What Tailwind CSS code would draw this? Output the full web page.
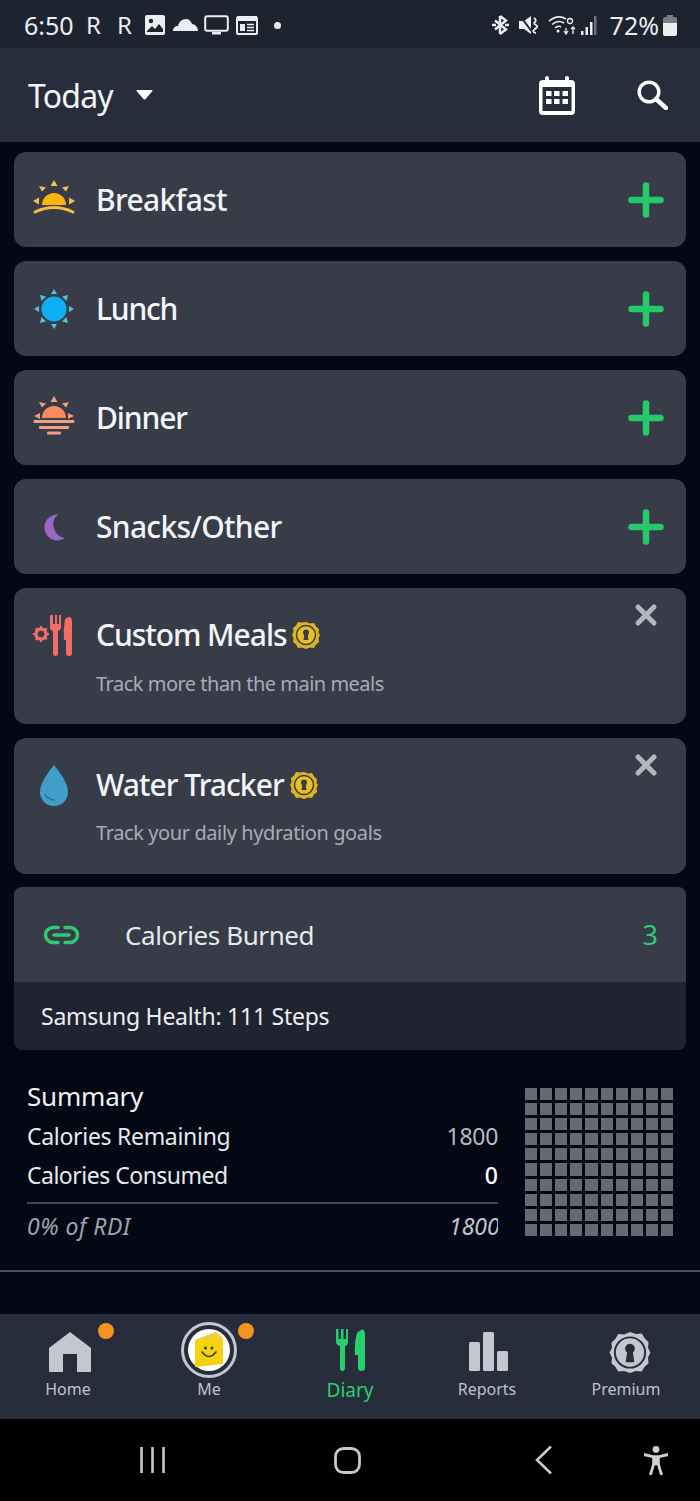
<!DOCTYPE html>
<html lang="en">
<head>
<meta charset="utf-8">
<script src="https://cdn.jsdelivr.net/npm/@tailwindcss/browser@4"></script>
<title>Diary</title>
</head>
<body class="bg-[#030814]">
<div class="w-[700px] h-[1501px] overflow-hidden flex flex-col bg-[#030814] text-white font-['Noto_Sans',sans-serif]">

  <!-- status bar -->
  <div class="h-[48px] shrink-0 bg-[#1e2330] flex items-center justify-between pl-[24px] pr-[23px] pt-[2px] text-[#eceef2]">
    <div class="flex items-center">
      <span class="text-[25px] leading-none w-[62px]">6:50</span>
      <span class="text-[24px] leading-none w-[31px]">R</span>
      <span class="text-[24px] leading-none w-[27px]">R</span>
      <svg class="w-[22px] h-[22px]" viewBox="0 0 22 22"><rect x="1" y="1" width="20" height="20" rx="2" fill="#eceef2"/><circle cx="7" cy="7" r="2.2" fill="#1e2330"/><path d="M3 17l5-5 3 3 4-5 4 5v3H3z" fill="#1e2330"/></svg>
      <svg class="w-[25px] h-[14px] ml-[7px]" viewBox="0 0 25 14"><path d="M0 13c0-3 2-5 5-5 1-4 4-7 8-7 3 0 5 2 6 5 3 0 6 3 6 7H0z" fill="#eceef2"/></svg>
      <svg class="w-[25px] h-[20px] ml-[6px]" viewBox="0 0 25 20"><rect x="1.2" y="1.2" width="22.6" height="14.6" rx="2" fill="none" stroke="#eceef2" stroke-width="2"/><rect x="8" y="17" width="9" height="2.5" fill="#eceef2"/></svg>
      <svg class="w-[22px] h-[20px] ml-[7px]" viewBox="0 0 22 20"><rect x="1" y="2.5" width="20" height="16.5" rx="1" fill="none" stroke="#eceef2" stroke-width="2"/><rect x="1" y="1" width="20" height="5" fill="#eceef2"/><rect x="4" y="9" width="5" height="7" fill="#eceef2"/><path d="M11 9.5h7M11 12.5h7M11 15.5h7" stroke="#eceef2" stroke-width="1.5"/></svg>
      <span class="w-[7px] h-[7px] rounded-full bg-[#eceef2] ml-[16px]"></span>
    </div>
    <div class="flex items-center">
      <svg class="w-[19px] h-[22px]" viewBox="0 0 19 22"><path d="M9 2l6 4.5-11 9M9 20l6-4.5-11-9M9 2v18" fill="none" stroke="#eceef2" stroke-width="2.4"/><path d="M1 11h4M14 11h4" stroke="#eceef2" stroke-width="2.4"/></svg>
      <svg class="w-[21px] h-[20px] ml-[9px]" viewBox="0 0 21 20"><path d="M0 6h5l7-5v18l-7-5H0z" fill="#eceef2"/><path d="M1 1l13 17" stroke="#1e2330" stroke-width="2"/><path d="M15 3q3 2 1 4t1 3-1 4 1 4" fill="none" stroke="#eceef2" stroke-width="1.8"/></svg>
      <svg class="w-[28px] h-[20px] ml-[8px]" viewBox="0 0 28 20"><path d="M1 6q9-7 17-2M4 9.500q6-5 12-1.500M7 13q3-3 6-1" fill="none" stroke="#eceef2" stroke-width="1.6"/><circle cx="10" cy="16" r="1.500" fill="#eceef2"/><path d="M18 19v-6M16 16l2 3 2-3M25 19v-7M23 14l2-2 2 2" fill="none" stroke="#eceef2" stroke-width="1.300"/><circle cx="22" cy="6" r="2.500" fill="none" stroke="#eceef2" stroke-width="1.300"/></svg>
      <svg class="w-[18px] h-[20px] ml-[5px]" viewBox="0 0 18 20"><rect x="0" y="16" width="2.500" height="4" fill="#eceef2"/><rect x="4.500" y="12" width="2.500" height="8" fill="#eceef2"/><rect x="9" y="7" width="2.500" height="13" fill="#eceef2"/><rect x="13" y="1" width="2.500" height="19" fill="#6e7280"/></svg>
      <span class="text-[25px] leading-none ml-[11px] whitespace-nowrap">72%</span>
      <svg class="w-[14px] h-[21px] ml-[4px] shrink-0" viewBox="0 0 14 21"><path d="M4 0h6v2h2q2 0 2 2v4H0V4q0-2 2-2h2z" fill="#7a7d87"/><path d="M0 8h14v11q0 2-2 2H2q-2 0-2-2z" fill="#eceef2"/></svg>
    </div>
  </div>

  <!-- app bar -->
  <div class="h-[94px] shrink-0 bg-[#272d3a] flex items-center pl-[28px] pr-[32px]">
    <span class="mr-[23px] pt-[2px] w-[85px] text-[32px] leading-none whitespace-nowrap tracking-[-0.8px] text-[#f4f5f8]">Today</span>
    <svg class="w-[17px] h-[10px]" viewBox="0 0 17 10"><path d="M0.500 1q-.3-1 1-1h14q1.300 0 1 1L9.500 9q-1 1-2 0z" fill="#fff"/></svg>
    <div class="ml-auto flex items-center">
      <svg class="w-[36px] h-[39px]" viewBox="0 0 36 39"><path d="M6 4V2q0-2 2-2t2 2v2h16V2q0-2 2-2t2 2v2h2q4 0 4 4v27q0 4-4 4H4q-4 0-4-4V8q0-4 4-4z" fill="#fff"/><rect x="3.500" y="11" width="29" height="24" fill="#272d3a"/><g fill="#fff"><rect x="7" y="15" width="5.500" height="5"/><rect x="15" y="15" width="5.500" height="5"/><rect x="23.500" y="15" width="5.500" height="5"/><rect x="7" y="23" width="5.500" height="5"/><rect x="15" y="23" width="5.500" height="5"/><rect x="23.500" y="23" width="5.500" height="5"/></g></svg>
      <svg class="w-[31px] h-[30px] ml-[62px]" viewBox="0 0 31 30"><circle cx="12" cy="12" r="9.800" fill="none" stroke="#fff" stroke-width="3.400"/><path d="M19 19l10 9" stroke="#fff" stroke-width="4.400" stroke-linecap="round"/></svg>
    </div>
  </div>

  <!-- content -->
  <div class="flex-1 flex flex-col pt-[10px]">
    <div class="flex flex-col px-[14px] gap-[14px]">

      <div class="h-[95px] rounded-xl bg-[#383c49] flex items-center pl-[18px] pr-[22px]">
        <svg class="w-[44px] h-[44px] shrink-0" viewBox="0 0 44 44"><path d="M10 27a12 12 0 0 1 24 0z" fill="#fbb40a"/><path d="M3 34q19-9 38 0" fill="none" stroke="#f3bf3c" stroke-width="3" stroke-linecap="round"/><g fill="#f3c24a"><path d="M22 2l3.500 6h-7z"/><path d="M7 8l7 1.500-4 4z"/><path d="M37 8l-7 1.500 4 4z"/><path d="M1 23l6-3.500v7z"/><path d="M43 23l-6-3.500v7z"/></g></svg>
        <span class="ml-[20px] text-[30px] leading-none font-medium tracking-[-0.65px] text-[#f4f5f8]">Breakfast</span>
        <svg class="ml-auto w-[36px] h-[36px]" viewBox="0 0 36 36"><path d="M18 3.500v29M3.500 18h29" stroke="#26c96a" stroke-width="6.500" stroke-linecap="round"/></svg>
      </div>

      <div class="h-[95px] rounded-xl bg-[#383c49] flex items-center pl-[18px] pr-[22px]">
        <svg class="w-[44px] h-[44px] shrink-0" viewBox="0 0 44 44"><circle cx="22" cy="22" r="12.500" fill="#0db0f5"/><g fill="#5ebcdc"><path d="M22 2l3 5h-6z"/><path d="M22 42l3-5h-6z"/><path d="M2 22l5-3v6z"/><path d="M42 22l-5-3v6z"/><path d="M8 8l6 1.500-4.500 4.500z"/><path d="M36 8l-6 1.500 4.500 4.500z"/><path d="M8 36l6-1.500-4.500-4.500z"/><path d="M36 36l-6-1.500 4.500-4.500z"/></g></svg>
        <span class="ml-[20px] text-[30px] leading-none font-medium tracking-[-1.2px] text-[#f4f5f8]">Lunch</span>
        <svg class="ml-auto w-[36px] h-[36px]" viewBox="0 0 36 36"><path d="M18 3.500v29M3.500 18h29" stroke="#26c96a" stroke-width="6.500" stroke-linecap="round"/></svg>
      </div>

      <div class="h-[95px] rounded-xl bg-[#383c49] flex items-center pl-[18px] pr-[22px]">
        <svg class="w-[44px] h-[44px] shrink-0" viewBox="0 0 44 44"><path d="M10 22a12 12 0 0 1 24 0z" fill="#f98b5f"/><g fill="#f0a07f"><path d="M22 0l3.500 6h-7z"/><path d="M7 6l7 1.500-4 4z"/><path d="M37 6l-7 1.500 4 4z"/><path d="M2 20l6-3v6z"/><path d="M42 20l-6-3v6z"/><rect x="1.500" y="24" width="41" height="3" rx="1"/><rect x="7" y="30" width="30" height="3" rx="1"/><rect x="15" y="35.500" width="14" height="3" rx="1"/></g></svg>
        <span class="ml-[20px] text-[30px] leading-none font-medium tracking-[-1.1px] text-[#f4f5f8]">Dinner</span>
        <svg class="ml-auto w-[36px] h-[36px]" viewBox="0 0 36 36"><path d="M18 3.500v29M3.500 18h29" stroke="#26c96a" stroke-width="6.500" stroke-linecap="round"/></svg>
      </div>

      <div class="h-[95px] rounded-xl bg-[#383c49] flex items-center pl-[18px] pr-[22px]">
        <svg class="w-[44px] h-[44px] shrink-0" viewBox="0 0 44 44"><path d="M26 9.500A13 13 0 1 0 33 33 13.500 13.500 0 0 1 26 9.500z" fill="#9a66c8"/></svg>
        <span class="ml-[20px] text-[30px] leading-none font-medium tracking-[-0.7px] text-[#f4f5f8]">Snacks/Other</span>
        <svg class="ml-auto w-[36px] h-[36px]" viewBox="0 0 36 36"><path d="M18 3.500v29M3.500 18h29" stroke="#26c96a" stroke-width="6.500" stroke-linecap="round"/></svg>
      </div>

      <div class="h-[136px] rounded-xl bg-[#383c49] flex pl-[18px] pr-[28px] pt-[26px]">
        <svg class="w-[44px] h-[44px] shrink-0" viewBox="0 0 44 44"><g fill="#ef6f66"><path d="M18 1h2v9h2V1h2v9h2V1h2v12q0 3-3 4v22q0 3-2.500 3T20 39V17q-3-1-3-4V1z" transform="translate(1 0)"/><path d="M33 5q7-5 7 3v31q0 3-3 3t-3-3V26h-2q-1-10 1-21z"/><circle cx="9" cy="20" r="5" fill="none" stroke="#ef6f66" stroke-width="3.500"/><path d="M8 12h2v3H8zM8 25h2v3H8zM1 19h3v2H1zM14 19h3v2h-3zM3 15l1.500-1.500 2 2L5 17zM12 24l1.500-1.500 2 2L14 26zM3 25l2-2 1.500 1.500-2 2zM12 15.500l2-2 1.500 1.500-2 2z"/></g></svg>
        <div class="ml-[20px]">
          <div class="flex items-center h-[42px]">
            <span class="text-[30px] leading-none font-medium tracking-[-1.05px] text-[#f4f5f8]">Custom Meals</span>
            <svg class="w-[28px] h-[28px] ml-[6px]" viewBox="0 0 28 28"><path d="M14 1l4 1.500 4-.5 2 3.500 3 2.500-.5 4L28 14l-1.500 3 .5 4-3 2.500-2 3.500-4-.5-4 1.500-4-1.500-4 .5-2-3.500-3-2.500.5-4L0 14l1.500-3-.5-4 3-2.500 2-3.500 4 .5z" fill="#dcb41d"/><circle cx="14" cy="14" r="9.500" fill="#e7c21f" stroke="#383c49" stroke-width="1.500"/><circle cx="14" cy="11.500" r="3" fill="#383c49"/><path d="M12.500 12h3l1 7h-5z" fill="#383c49"/></svg>
          </div>
          <div class="mt-[18px] text-[20px] leading-none tracking-[-0.5px] text-[#a8abb5]">Track more than the main meals</div>
        </div>
        <svg class="ml-auto mt-[-11px] w-[24px] h-[24px]" viewBox="0 0 24 24"><path d="M4 4l16 16M20 4L4 20" stroke="#b3b6be" stroke-width="5" stroke-linecap="round"/></svg>
      </div>

      <div class="h-[136px] rounded-xl bg-[#383c49] flex pl-[18px] pr-[28px] pt-[26px]">
        <svg class="w-[44px] h-[44px] shrink-0 mt-[-2px]" viewBox="0 0 44 44"><path d="M22 3q14 17 14 27a14 14 0 0 1-28 0Q8 20 22 3z" fill="#3f9fc6"/><path d="M13 32q3 6 10 6" fill="none" stroke="#2a6d8c" stroke-width="1.500"/></svg>
        <div class="ml-[20px]">
          <div class="flex items-center h-[42px]">
            <span class="text-[30px] leading-none font-medium tracking-[-0.95px] text-[#f4f5f8]">Water Tracker</span>
            <svg class="w-[28px] h-[28px] ml-[6px]" viewBox="0 0 28 28"><path d="M14 1l4 1.500 4-.5 2 3.500 3 2.500-.5 4L28 14l-1.500 3 .5 4-3 2.500-2 3.500-4-.5-4 1.500-4-1.500-4 .5-2-3.500-3-2.500.5-4L0 14l1.500-3-.5-4 3-2.500 2-3.500 4 .5z" fill="#dcb41d"/><circle cx="14" cy="14" r="9.500" fill="#e7c21f" stroke="#383c49" stroke-width="1.500"/><circle cx="14" cy="11.500" r="3" fill="#383c49"/><path d="M12.500 12h3l1 7h-5z" fill="#383c49"/></svg>
          </div>
          <div class="mt-[17px] text-[20px] leading-none tracking-[-0.4px] text-[#a8abb5]">Track your daily hydration goals</div>
        </div>
        <svg class="ml-auto mt-[-11px] w-[24px] h-[24px]" viewBox="0 0 24 24"><path d="M4 4l16 16M20 4L4 20" stroke="#b3b6be" stroke-width="5" stroke-linecap="round"/></svg>
      </div>

      <div class="mt-[-1px] h-[163px] rounded-lg overflow-hidden flex flex-col">
        <div class="h-[95px] bg-[#383c49] flex items-center pl-[30px] pr-[28px]">
          <svg class="w-[35px] h-[20px]" viewBox="0 0 35 20"><path d="M14 2.500H9a7.500 7.500 0 0 0 0 15h5M21 2.500h5a7.500 7.500 0 0 1 0 15h-5M10 10h15" fill="none" stroke="#2ecc71" stroke-width="3.400" stroke-linecap="round"/></svg>
          <span class="ml-[46px] text-[26px] leading-none tracking-[-0.4px] text-[#e8e9ee]">Calories Burned</span>
          <span class="ml-auto text-[27px] leading-none text-[#2ecc71]">3</span>
        </div>
        <div class="flex-1 bg-[#1f2430] flex items-center pl-[27px]">
          <span class="text-[23px] leading-none tracking-[-0.25px] text-[#eceef2]">Samsung Health: 111 Steps</span>
        </div>
      </div>
    </div>

    <!-- summary -->
    <div class="flex pl-[27px] pr-[27px] pt-[29px] h-[222px] border-b-2 border-[#4a4e5a]">
      <div class="w-[471px] shrink-0">
        <div class="h-[34px] flex items-center text-[26px] leading-none tracking-[-0.2px] text-[#f0f1f4]">Summary</div>
        <div class="h-[39px] mt-[4px] flex items-center justify-between text-[23px] leading-none tracking-[-0.3px]"><span class="text-[#e8e9ee]">Calories Remaining</span><span class="text-[#b9bbc3]">1800</span></div>
        <div class="h-[39px] flex items-center justify-between text-[23px] leading-none"><span class="tracking-[-0.5px] text-[#e8e9ee]">Calories Consumed</span><span class="text-white font-medium">0</span></div>
        <div class="mt-[7px] pt-[8px] h-[38px] border-t-2 border-[#43464f] flex items-center justify-between text-[23px] leading-none italic text-[#a0a3ad]"><span class="tracking-[0.5px]">0% of RDI</span><span class="w-[49px] h-[28px] leading-[28px] overflow-clip text-[#c4c6ce]">1800</span></div>
      </div>
      <div class="ml-[27px] w-[148px] h-[148px] mt-[9px] grid grid-cols-10 gap-[3px]">
        <i class="bg-[#656974]"></i><i class="bg-[#656974]"></i><i class="bg-[#656974]"></i><i class="bg-[#656974]"></i><i class="bg-[#656974]"></i><i class="bg-[#656974]"></i><i class="bg-[#656974]"></i><i class="bg-[#656974]"></i><i class="bg-[#656974]"></i><i class="bg-[#656974]"></i>
        <i class="bg-[#656974]"></i><i class="bg-[#656974]"></i><i class="bg-[#656974]"></i><i class="bg-[#656974]"></i><i class="bg-[#656974]"></i><i class="bg-[#656974]"></i><i class="bg-[#656974]"></i><i class="bg-[#656974]"></i><i class="bg-[#656974]"></i><i class="bg-[#656974]"></i>
        <i class="bg-[#656974]"></i><i class="bg-[#656974]"></i><i class="bg-[#656974]"></i><i class="bg-[#656974]"></i><i class="bg-[#656974]"></i><i class="bg-[#656974]"></i><i class="bg-[#656974]"></i><i class="bg-[#656974]"></i><i class="bg-[#656974]"></i><i class="bg-[#656974]"></i>
        <i class="bg-[#656974]"></i><i class="bg-[#656974]"></i><i class="bg-[#656974]"></i><i class="bg-[#656974]"></i><i class="bg-[#656974]"></i><i class="bg-[#656974]"></i><i class="bg-[#656974]"></i><i class="bg-[#656974]"></i><i class="bg-[#656974]"></i><i class="bg-[#656974]"></i>
        <i class="bg-[#656974]"></i><i class="bg-[#656974]"></i><i class="bg-[#656974]"></i><i class="bg-[#656974]"></i><i class="bg-[#656974]"></i><i class="bg-[#656974]"></i><i class="bg-[#656974]"></i><i class="bg-[#656974]"></i><i class="bg-[#656974]"></i><i class="bg-[#656974]"></i>
        <i class="bg-[#656974]"></i><i class="bg-[#656974]"></i><i class="bg-[#656974]"></i><i class="bg-[#656974]"></i><i class="bg-[#656974]"></i><i class="bg-[#656974]"></i><i class="bg-[#656974]"></i><i class="bg-[#656974]"></i><i class="bg-[#656974]"></i><i class="bg-[#656974]"></i>
        <i class="bg-[#656974]"></i><i class="bg-[#656974]"></i><i class="bg-[#656974]"></i><i class="bg-[#656974]"></i><i class="bg-[#656974]"></i><i class="bg-[#656974]"></i><i class="bg-[#656974]"></i><i class="bg-[#656974]"></i><i class="bg-[#656974]"></i><i class="bg-[#656974]"></i>
        <i class="bg-[#656974]"></i><i class="bg-[#656974]"></i><i class="bg-[#656974]"></i><i class="bg-[#656974]"></i><i class="bg-[#656974]"></i><i class="bg-[#656974]"></i><i class="bg-[#656974]"></i><i class="bg-[#656974]"></i><i class="bg-[#656974]"></i><i class="bg-[#656974]"></i>
        <i class="bg-[#656974]"></i><i class="bg-[#656974]"></i><i class="bg-[#656974]"></i><i class="bg-[#656974]"></i><i class="bg-[#656974]"></i><i class="bg-[#656974]"></i><i class="bg-[#656974]"></i><i class="bg-[#656974]"></i><i class="bg-[#656974]"></i><i class="bg-[#656974]"></i>
        <i class="bg-[#656974]"></i><i class="bg-[#656974]"></i><i class="bg-[#656974]"></i><i class="bg-[#656974]"></i><i class="bg-[#656974]"></i><i class="bg-[#656974]"></i><i class="bg-[#656974]"></i><i class="bg-[#656974]"></i><i class="bg-[#656974]"></i><i class="bg-[#656974]"></i>
      </div>
    </div>
  </div>

  <!-- bottom nav -->
  <div class="h-[105px] shrink-0 bg-[#272d3a] flex pr-[4px] text-[#c0c2ca]">
    <div class="relative w-[136px] flex flex-col items-center pt-[17px]">
      <svg class="w-[44px] h-[42px] ml-[3px]" viewBox="0 0 44 42"><path d="M22 1L43 17v23q0 1-1 1H29V23H15v18H2q-1 0-1-1V17z" fill="#c4c6d0"/></svg>
      <span class="mt-[5px] text-[16px] leading-[22px]">Home</span>
      <span class="absolute left-[98px] top-[9px] w-[16px] h-[16px] rounded-full bg-[#f7931e]"></span>
    </div>
    <div class="relative w-[146px] flex flex-col items-center pt-[8px]">
      <div class="w-[56px] h-[56px] rounded-full border-[3px] border-[#c4c6d0] flex items-center justify-center">
        <svg class="w-[42px] h-[42px]" viewBox="0 0 42 42"><circle cx="21" cy="21" r="21" fill="#fff"/><path d="M7 11L28 3l7 6v26l-28 3z" fill="#f4d20c"/><path d="M7 11L28 3l7 6v3z" fill="#f0cf3a"/><circle cx="17.500" cy="19" r="1.500" fill="#3a3a20"/><circle cx="24" cy="19" r="1.500" fill="#3a3a20"/><path d="M14 23q7 9 14 0" fill="none" stroke="#3a3a20" stroke-width="1.600" stroke-linecap="round"/></svg>
      </div>
      <span class="text-[16px] leading-[22px]">Me</span>
      <span class="absolute left-[102px] top-[9px] w-[16px] h-[16px] rounded-full bg-[#f7931e]"></span>
    </div>
    <div class="w-[136px] flex flex-col items-center pt-[15px] text-[#2ecc71]">
      <svg class="w-[29px] h-[42px]" viewBox="0 0 29 42"><path d="M0 0h2.500v10H5V0h2.500v10H10V0h2v13q0 3-3 4v22q0 3-2.500 3T4 39V17q-4-1-4-4z" fill="#26d06f"/><path d="M21 4q8-8 8 2v33q0 3-3.500 3T22 39V26h-3q-1-12 2-22z" fill="#26d06f"/></svg>
      <span class="mt-[8px] text-[19px] leading-[22px]">Diary</span>
    </div>
    <div class="w-[138px] flex flex-col items-center pt-[18px]">
      <svg class="w-[39px] h-[39px] ml-[3px]" viewBox="0 0 39 39"><rect x="0" y="10" width="11" height="29" rx="1.500" fill="#c4c6d0"/><rect x="14" y="0" width="11" height="39" rx="1.500" fill="#c4c6d0"/><rect x="28" y="19" width="11" height="20" rx="1.500" fill="#c4c6d0"/></svg>
      <span class="mt-[7px] text-[16px] leading-[22px]">Reports</span>
    </div>
    <div class="w-[140px] flex flex-col items-center pt-[18px]">
      <svg class="w-[42px] h-[41px] ml-[8px]" viewBox="0 0 42 42"><path d="M21 0l6 2 6-.5 3 5 4 4-.5 6L42 21l-2.500 5 .5 6-4 3.500-3 5-6-.5-6 2-6-2-6 .5-3-5L2 32l.5-6L0 21l2.500-4.500L2 11l4-4 3-5 6 .5z" fill="#c4c6d0"/><circle cx="21" cy="21" r="15.500" fill="#c4c6d0" stroke="#272d3a" stroke-width="2"/><circle cx="21" cy="17" r="5" fill="#272d3a"/><path d="M18.500 18h5l2 13h-9z" fill="#272d3a"/></svg>
      <span class="mt-[5px] text-[16px] leading-[22px]">Premium</span>
    </div>
  </div>

  <!-- system navigation -->
  <div class="h-[82px] shrink-0 bg-black flex items-center text-[#c8c8c8]">
    <svg class="ml-[140px] w-[25px] h-[26px]" viewBox="0 0 25 26"><path d="M1.500 0v26M12.500 0v26M23.500 0v26" stroke="#c8c8c8" stroke-width="2.600"/></svg>
    <svg class="ml-[169px] w-[27px] h-[27px]" viewBox="0 0 27 27"><rect x="1.500" y="1.500" width="24" height="24" rx="8" fill="none" stroke="#c8c8c8" stroke-width="2.800"/></svg>
    <svg class="ml-[174px] w-[18px] h-[30px]" viewBox="0 0 18 30"><path d="M16 1.500L2 15l14 13.500" fill="none" stroke="#c8c8c8" stroke-width="2.600"/></svg>
    <svg class="ml-[91px] w-[24px] h-[29px]" viewBox="0 0 25 30"><circle cx="12.500" cy="3.500" r="3.500" fill="#d0d0d0"/><path d="M1 9l8 2h7l8-2M10 11v8l-3 10M15 11v8l3 10" fill="none" stroke="#d0d0d0" stroke-width="3" stroke-linecap="round"/><rect x="9.500" y="11" width="6" height="9" fill="#d0d0d0"/></svg>
  </div>
</div>
</body>
</html>
